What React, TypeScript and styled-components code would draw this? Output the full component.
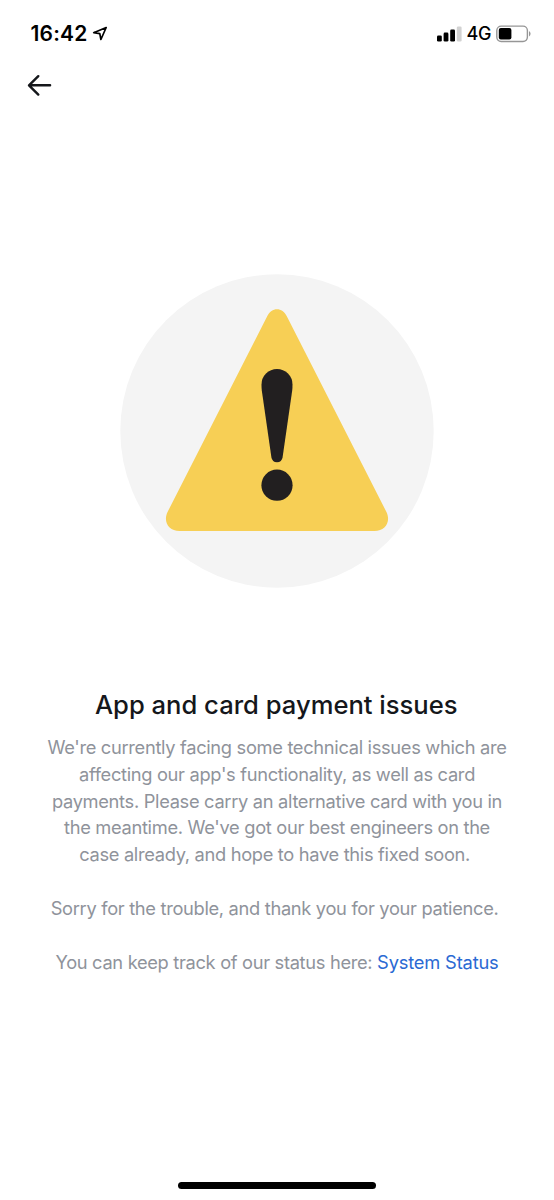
import React from "react";
import styled, { createGlobalStyle } from "styled-components";

const GlobalStyle = createGlobalStyle`
  * { box-sizing: border-box; }
  body { margin: 0; background: #fff; }
`;

const Screen = styled.main`
  width: 554px;
  height: 1200px;
  display: flex;
  flex-direction: column;
  overflow: hidden;
  background: #fff;
  color: #15171b;
  font-family: Inter, "Liberation Sans", sans-serif;
`;

const StatusBar = styled.header`
  height: 66px;
  padding: 1px 23px 0 30.5px;
  display: flex;
  justify-content: space-between;
  align-items: center;
  color: #000;
`;

const StatusGroup = styled.div<{ $gap: number }>`
  display: flex;
  align-items: center;
  gap: ${({ $gap }) => $gap}px;
`;

const Clock = styled.time`
  font-size: 21px;
  line-height: 26px;
  font-weight: 600;
  letter-spacing: 0.2px;
`;

const Network = styled.span`
  font-size: 18px;
  line-height: 26px;
  font-weight: 500;
  letter-spacing: -0.4px;
`;

const NavBar = styled.nav`
  height: 38px;
  padding-left: 26px;
  display: flex;
  align-items: center;
`;

const BackButton = styled.button`
  width: 27px;
  height: 27px;
  padding: 0;
  border: 0;
  background: none;
  display: block;
`;

const Content = styled.section`
  flex: 1;
  display: flex;
  flex-direction: column;
  align-items: center;
  padding-top: 170px;
`;

const Illustration = styled.svg`
  display: block;
  width: 314px;
  height: 314px;
  flex: none;
`;

const Title = styled.h1`
  margin: 100px 0 0;
  padding-right: 1.5px;
  font-size: 25.6px;
  line-height: 34px;
  font-weight: 500;
  white-space: nowrap;
`;

const Message = styled.div`
  margin-top: 12px;
  display: flex;
  flex-direction: column;
  gap: 26.8px;
  color: #8f939b;
  font-size: 18.3px;
  line-height: 26.83px;
  letter-spacing: -0.32px;
  text-align: center;
  white-space: nowrap;
`;

const Paragraph = styled.p`
  margin: 0;
`;

const StatusLink = styled.a`
  color: #2a69d3;
  letter-spacing: -0.18px;
  text-decoration: none;
`;

const HomeArea = styled.footer`
  height: 18px;
  display: flex;
  justify-content: center;
`;

const HomeIndicator = styled.div`
  width: 198px;
  height: 7px;
  border-radius: 4px;
  background: #000;
`;

const LocationIcon = () => (
  <svg width="16" height="16" viewBox="0 0 16 16" fill="none" aria-hidden="true">
    <path d="M14.2 1.5 1.7 6.7 7.8 7.6 8.9 13.5Z" stroke="#000" strokeWidth="1.7" strokeLinejoin="round" />
  </svg>
);

const SignalIcon = () => (
  <svg width="25" height="16" viewBox="0 0 25 16" aria-hidden="true">
    <rect x="0" y="9.4" width="4.8" height="6.2" rx="1.3" />
    <rect x="6.6" y="6.6" width="4.8" height="9" rx="1.3" />
    <rect x="13.2" y="3.6" width="4.8" height="12" rx="1.3" />
    <rect x="19.8" y="0.4" width="4.8" height="15.2" rx="1.3" fill="#d2d2d2" />
  </svg>
);

const BatteryIcon = () => (
  <svg width="35" height="18" viewBox="0 0 35 18" aria-hidden="true">
    <rect x="0.8" y="1.1" width="30.6" height="15.4" rx="4.4" fill="none" stroke="#969696" strokeWidth="1.4" />
    <rect x="2.8" y="3" width="12.6" height="11.6" rx="2" />
    <path d="M33 6.1q1.6 1 1.6 2.7T33 11.5Z" fill="#969696" />
  </svg>
);

export default function App() {
  return (
    <>
      <GlobalStyle />
      <Screen>
        <StatusBar>
          <StatusGroup $gap={4}>
            <Clock>16:42</Clock>
            <LocationIcon />
          </StatusGroup>
          <StatusGroup $gap={5}>
            <SignalIcon />
            <Network>4G</Network>
            <BatteryIcon />
          </StatusGroup>
        </StatusBar>
        <NavBar>
          <BackButton aria-label="Back">
            <svg width="27" height="27" viewBox="0 0 27 27" fill="none">
              <path d="M12.3 4.2 3 13.3l9.3 9.3M3.2 13.3h20.9" stroke="#15171b" strokeWidth="2.4" strokeLinecap="round" strokeLinejoin="round" />
            </svg>
          </BackButton>
        </NavBar>
        <Content>
          <Illustration viewBox="120 274 314 314" role="img" aria-label="Warning">
            <circle cx="277" cy="431" r="156.7" fill="#f4f4f4" />
            <path d="M267.2 316.3C271.5 306.8 282.5 306.8 286.8 316.3L386.2 511.5C391.3 521.5 385.5 531 374.5 531H179.5C168.5 531 162.7 521.5 167.8 511.5Z" fill="#f7cf55" />
            <path d="M261.5 384.5a15.5 15.5 0 0 1 31 0q0 3-.3 6L282.6 457.2q-.8 5.1-5.6 5.1t-5.6-5.1L261.8 390.5q-.3-3-.3-6Z" fill="#221f20" />
            <circle cx="277" cy="485.2" r="15.6" fill="#221f20" />
          </Illustration>
          <Title>App and card payment issues</Title>
          <Message>
            <Paragraph>
              We're currently facing some technical issues which are<br />
              affecting our app's functionality, as well as card<br />
              payments. Please carry an alternative card with you in<br />
              the meantime. We've got our best engineers on the<br />
              case already, and hope to have this fixed soon.&nbsp;
            </Paragraph>
            <Paragraph>Sorry for the trouble, and thank you for your patience.&nbsp;</Paragraph>
            <Paragraph>
              You can keep track of our status here: <StatusLink href="#">System Status</StatusLink>
            </Paragraph>
          </Message>
        </Content>
        <HomeArea>
          <HomeIndicator />
        </HomeArea>
      </Screen>
    </>
  );
}
